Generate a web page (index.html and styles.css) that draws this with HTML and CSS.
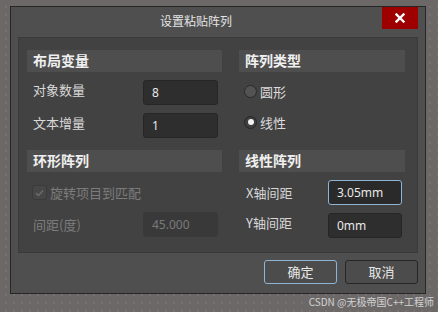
FILE: index.html
```html
<!DOCTYPE html>
<html>
<head>
<meta charset="utf-8">
<link rel="stylesheet" href="styles.css">
</head>
<body>
<div class="dialog">
  <div class="titlebar">
    <span class="title">设置粘贴阵列</span>
    <button class="close" aria-label="关闭">
      <svg width="10" height="10" viewBox="0 0 10 10"><path d="M1.5 1.5 L8.5 8.5 M8.5 1.5 L1.5 8.5" stroke="#fff" stroke-width="2.4" stroke-linecap="square"/></svg>
    </button>
  </div>
  <div class="panel">
    <section class="sec">
      <div class="sec-head">布局变量</div>
      <div class="row row-left"><span class="lbl up">对象数量</span><div class="inp">8</div></div>
      <div class="row row-left"><span class="lbl up">文本增量</span><div class="inp">1</div></div>
    </section>
    <section class="sec">
      <div class="sec-head">阵列类型</div>
      <div class="radio-row"><span class="radio"></span><span class="rlbl">圆形</span></div>
      <div class="radio-row second"><span class="radio on"></span><span class="rlbl">线性</span></div>
    </section>
    <section class="sec">
      <div class="sec-head">环形阵列</div>
      <div class="row check-row"><span class="check">
        <svg width="9" height="8" viewBox="0 0 9 8"><path d="M1 4 L3.5 6.5 L8 1.5" fill="none" stroke="#6e6e6e" stroke-width="1.3"/></svg>
      </span><span class="lbl dis">旋转项目到匹配</span></div>
      <div class="row row-left tight"><span class="lbl dis">间距(度)</span><div class="inp disabled">45.000</div></div>
    </section>
    <section class="sec">
      <div class="sec-head">线性阵列</div>
      <div class="row row-right"><span class="lbl">X轴间距</span><div class="inp focus">3.05mm</div></div>
      <div class="row row-right"><span class="lbl up">Y轴间距</span><div class="inp">0mm</div></div>
    </section>
  </div>
  <div class="buttons">
    <button class="btn primary">确定</button>
    <button class="btn">取消</button>
  </div>
</div>
<div class="watermark">CSDN @无极帝国C++工程师</div>
</body>
</html>
```

FILE: styles.css
```css
html, body {
  margin: 0;
  padding: 0;
}
body {
  width: 438px;
  height: 312px;
  overflow: hidden;
  background-color: #6c6867;
  background-image: radial-gradient(circle, #7b7776 0.6px, transparent 0.9px);
  background-size: 8px 8px;
  background-position: 2px 3px;
  padding: 6px 0 0 10px;
  box-sizing: border-box;
  font-family: "Noto Sans CJK SC", "Noto Sans", sans-serif;
  color: #dcdcdc;
}
.dialog {
  width: 416px;
  height: 288px;
  box-sizing: border-box;
  border: 1px solid #262626;
  background: #4f4f4f;
  display: flex;
  flex-direction: column;
}
.titlebar {
  height: 30px;
  display: flex;
  justify-content: center;
  padding-right: 44px;
  position: relative;
}
.title {
  font-size: 12px;
  line-height: 28px;
  color: #e4e4e4;
}
.close {
  position: absolute;
  top: 0;
  right: 7px;
  width: 36px;
  height: 22px;
  border: none;
  padding: 0;
  background: #9e0000;
  display: flex;
  align-items: center;
  justify-content: center;
}
.panel {
  margin: 0 7px;
  height: 216px;
  box-sizing: border-box;
  border: 1px solid #3a3a3a;
  background: #424242;
  padding: 12px 12px 0 8px;
  display: grid;
  grid-template-columns: 195px 166px;
  grid-template-rows: 88px auto;
  column-gap: 17px;
  row-gap: 12px;
}
.sec-head {
  height: 22px;
  background: #4e4e4e;
  font-size: 14px;
  font-weight: bold;
  line-height: 21px;
  padding-left: 6px;
  color: #f0f0f0;
  margin-bottom: 8px;
}
.row {
  height: 25px;
  display: flex;
  align-items: center;
  margin-bottom: 8px;
}
.row.tight { margin-top: -1px; }
.lbl {
  font-size: 13px;
  color: #d8d8d8;
  padding-left: 6px;
}
.lbl.up { margin-bottom: 6px; }
.row-left .lbl { width: 110px; }
.row-right .lbl { width: 82px; padding-left: 7px; }
.lbl.dis { color: #7c7c7c; }
.inp {
  width: 75px;
  height: 25px;
  box-sizing: border-box;
  border: 1px solid #262626;
  border-radius: 3px;
  background: #2e2e2e;
  font-family: "Noto Sans", sans-serif;
  font-size: 12px;
  line-height: 23px;
  padding-left: 8px;
  color: #e8e8e8;
}
.row-right .inp { width: 74px; }
.inp.focus {
  border-color: #8fb4d6;
  background: #2a2a2a;
}
.inp.disabled {
  background: #393939;
  border-color: #393939;
  color: #7a7a7a;
}
.radio-row {
  height: 22px;
  display: flex;
  align-items: center;
  padding-left: 5px;
}
.radio-row.second { margin-top: 9px; }
.radio {
  width: 13px;
  height: 13px;
  box-sizing: border-box;
  border-radius: 50%;
  border: 1px solid #2a2a2a;
  background: #535353;
  margin-right: 3px;
  display: flex;
  align-items: center;
  justify-content: center;
}
.radio.on::after {
  content: "";
  width: 6px;
  height: 6px;
  border-radius: 50%;
  background: #f2f2f2;
}
.radio.on { background: #3e3e3e; border-color: #262626; }
.rlbl { font-size: 13px; color: #dcdcdc; }
.check-row { padding-left: 5px; }
.check {
  width: 15px;
  height: 15px;
  box-sizing: border-box;
  border: 1px solid #3a3a3a;
  border-radius: 3px;
  background: #474747;
  display: flex;
  align-items: center;
  justify-content: center;
  margin-right: 3px;
}
.check-row .lbl { padding-left: 0; }
.buttons {
  display: flex;
  justify-content: flex-end;
  gap: 8px;
  padding: 7px 7px 0 0;
}
.btn {
  width: 73px;
  height: 24px;
  box-sizing: border-box;
  border: 1px solid #262626;
  border-radius: 3px;
  background: #4c4c4c;
  color: #e8e8e8;
  font-family: "Noto Sans CJK SC", sans-serif;
  font-size: 13px;
  padding: 0;
  line-height: 22px;
}
.btn.primary { border-color: #8fb4d6; }
.watermark {
  text-align: right;
  padding-right: 4px;
  font-size: 10px;
  line-height: 13px;
  margin-top: 1px;
  color: #d2d2d2;
}
```
